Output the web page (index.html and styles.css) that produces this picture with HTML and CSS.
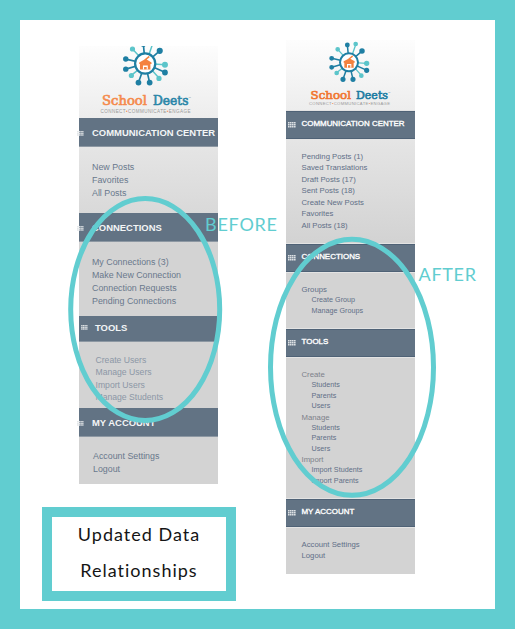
FILE: index.html
```html
<!DOCTYPE html>
<html lang="en">
<head>
<meta charset="utf-8">
<title>Updated Data Relationships</title>
<link rel="stylesheet" href="styles.css">
</head>
<body>
<svg class="defs" width="0" height="0">
  <symbol id="burst" viewBox="0 0 150 150">
    <g stroke="#5cc5ca" stroke-width="4" fill="#5cc5ca">
      <path d="M74 73L38 34M74 73L92 20M74 73L125 76M74 73L112 115M74 73L33 106"/>
      <circle cx="38" cy="34" r="5"/><circle cx="92" cy="18" r="5"/><circle cx="125" cy="76" r="6"/><circle cx="109" cy="113" r="5"/><circle cx="35" cy="105" r="5"/>
    </g>
    <g stroke="#1f7fa3" stroke-width="4.500" fill="#1f7fa3">
      <path d="M72 73L67 20M72 73L110 40M72 73L20 61M72 73L20 88M72 73L54 124M72 73L84 124M72 73L126 97"/>
      <circle cx="67" cy="21" r="5"/><circle cx="111" cy="39" r="6"/><circle cx="20" cy="61" r="5"/><circle cx="20" cy="88" r="5"/><circle cx="54" cy="124" r="5.500"/><circle cx="84" cy="124" r="5.500"/><circle cx="125" cy="97" r="5.500"/>
      <circle cx="72" cy="73" r="27" fill="#fff" stroke-width="6"/>
    </g>
    <path fill="#f4823f" d="M56 70L69 63L82 52L84 56L76 62L89 70V74H86V89H58V74H56Z"/>
    <path fill="#fff" d="M66 78H79V89H76V82H69V89H66Z"/>
  </symbol>
  <symbol id="grid" viewBox="0 0 8 6">
    <path fill="#dde1e4" d="M0 0h1.6v1.6H0zM2 0h1.6v1.6H2zM4 0h1.6v1.6H4zM6 0h1.6v1.6H6zM0 2h1.6v1.6H0zM2 2h1.6v1.6H2zM4 2h1.6v1.6H4zM6 2h1.6v1.6H6zM0 4h1.6v1.6H0zM2 4h1.6v1.6H2zM4 4h1.6v1.6H4zM6 4h1.6v1.6H6z"/>
  </symbol>
</svg>
<main class="frame">
  <div class="left-column">
    <nav class="panel before">
      <svg class="logo" width="139" height="72" viewBox="79 46 139 72">
        <use href="#burst" x="118.300" y="36.300" width="56" height="56"/>
        <g class="wordmark" font-size="12.600">
          <text x="102" y="105" textLength="45" lengthAdjust="spacingAndGlyphs" fill="#f58a4c" stroke="#f58a4c">School</text>
          <text x="153" y="105" textLength="35.500" lengthAdjust="spacingAndGlyphs" fill="#2b86a8" stroke="#2b86a8">Deets</text>
        </g>
        <text class="tagline" x="188.500" y="99" font-size="2.500">™</text>
        <text class="tagline" x="100.500" y="112.500" font-size="4.600" textLength="90">CONNECT<tspan fill="#f58a4c">•</tspan>COMMUNICATE<tspan fill="#f58a4c">•</tspan>ENGAGE</text>
      </svg>
      <h2><svg><use href="#grid"/></svg>COMMUNICATION CENTER</h2>
      <ul class="posts"><li>New Posts</li><li>Favorites</li><li>All Posts</li></ul>
      <h2><svg><use href="#grid"/></svg>CONNECTIONS</h2>
      <ul class="connections"><li>My Connections (3)</li><li>Make New Connection</li><li>Connection Requests</li><li>Pending Connections</li></ul>
      <h2 class="tools-title"><svg><use href="#grid"/></svg>TOOLS</h2>
      <ul class="tools"><li>Create Users</li><li>Manage Users</li><li>Import Users</li><li>Manage Students</li></ul>
      <h2><svg><use href="#grid"/></svg>MY ACCOUNT</h2>
      <ul class="account"><li>Account Settings</li><li>Logout</li></ul>
    </nav>
    <h1 class="caption"><span>Updated Data</span><span>Relationships</span></h1>
  </div>
  <nav class="panel after">
    <svg class="logo" width="129" height="71" viewBox="286 40 129 71">
      <use href="#burst" x="325" y="38" width="50" height="50"/>
      <g class="wordmark" font-size="11.500">
        <text x="310.500" y="98.800" textLength="40.500" lengthAdjust="spacingAndGlyphs" fill="#f1752e" stroke="#f1752e">School</text>
        <text x="356" y="98.800" textLength="32" lengthAdjust="spacingAndGlyphs" fill="#1c7ca2" stroke="#1c7ca2">Deets</text>
      </g>
      <text class="tagline" x="388" y="93.500" font-size="2.500">™</text>
      <text class="tagline" x="309" y="105.300" font-size="4.200" textLength="81">CONNECT<tspan fill="#f1752e">•</tspan>COMMUNICATE<tspan fill="#f1752e">•</tspan>ENGAGE</text>
    </svg>
    <h2><svg><use href="#grid"/></svg>COMMUNICATION CENTER</h2>
    <ul class="posts"><li>Pending Posts (1)</li><li>Saved Translations</li><li>Draft Posts (17)</li><li>Sent Posts (18)</li><li>Create New Posts</li><li>Favorites</li><li>All Posts (18)</li></ul>
    <h2><svg><use href="#grid"/></svg>CONNECTIONS</h2>
    <ul class="connections"><li>Groups</li><li class="sub">Create Group</li><li class="sub">Manage Groups</li></ul>
    <h2><svg><use href="#grid"/></svg>TOOLS</h2>
    <ul class="tools"><li>Create</li><li class="sub">Students</li><li class="sub">Parents</li><li class="sub">Users</li><li>Manage</li><li class="sub">Students</li><li class="sub">Parents</li><li class="sub">Users</li><li>Import</li><li class="sub">Import Students</li><li class="sub">Import Parents</li></ul>
    <h2><svg><use href="#grid"/></svg>MY ACCOUNT</h2>
    <ul class="account"><li>Account Settings</li><li>Logout</li></ul>
  </nav>
  <svg class="marks" width="515" height="629" viewBox="0 0 515 629">
    <ellipse cx="145.200" cy="309.500" rx="74.500" ry="111"/>
    <ellipse cx="352" cy="367.300" rx="81.500" ry="128"/>
    <text x="205" y="231" textLength="72">BEFORE</text>
    <text x="418.500" y="281" textLength="57.500">AFTER</text>
  </svg>
</main>
</body>
</html>
```
FILE: styles.css
```css
* { box-sizing: border-box; }
body { margin: 0; }
.defs { position: absolute; }
.frame {
  position: relative;
  display: flex;
  align-items: flex-start;
  width: 515px;
  height: 629px;
  border: 20px solid #61cdd0;
  background: #fff;
  overflow: hidden;
}
.left-column { width: 244px; margin-left: 22px; padding-top: 26px; }
.panel {
  display: flex;
  flex-direction: column;
  font-family: "Liberation Sans", Arial, sans-serif;
  color: #69788c;
  background: #d3d3d3 linear-gradient(#fdfdfd 0, #ededed 70px, #e4e4e4 105px, #d3d3d3 200px) no-repeat;
}
.logo { display: block; flex: none; }
.wordmark { font-family: "DejaVu Serif", serif; stroke-width: .6; }
.tagline { font-family: "Liberation Sans", sans-serif; fill: #999; }
.panel ul { list-style: none; margin: 0; padding: 0; flex: none; white-space: nowrap; }
.panel h2 {
  display: flex;
  align-items: center;
  flex: none;
  margin: 0;
  color: #fff;
  background: #627384;
  white-space: nowrap;
}
.panel h2 svg { flex: none; overflow: hidden; }

.before { width: 139px; height: 438px; margin-left: 37px; }
.before h2 { height: 29px; padding: 1px 0 0; font-size: 9.45px; color: #f3f5f6; border-bottom: 1px solid #8d98a3; }
.before h2 svg { width: 7px; height: 5px; margin: 1px 8px 0 -2px; }
.before ul { font-size: 8.85px; line-height: 12.9px; padding-left: 13px; }
.before .posts { height: 66px; padding-top: 14px; }
.before .connections { height: 74px; padding-top: 14px; }
.before .tools-title { height: 26px; padding: 0 0 3px; }
.before .tools-title svg { margin: 1px 7px 0 2px; }
.before .tools { height: 66px; padding: 12px 0 0 16.5px; font-size: 8.65px; line-height: 12.4px; color: #8c97a6; }
.before .account { padding: 13px 0 0 14px; }

.after { width: 129px; height: 534px; margin-top: 20px; color: #616f87; }
.after h2 {
  height: 28px;
  padding-bottom: 3px;
  font-size: 7.95px;
  font-weight: normal;
  -webkit-text-stroke: .35px #fff;
  border-top: 1px solid #4f6276;
  border-bottom: 1px solid #4f6276;
  box-shadow: 0 1px #e3e3e3, 0 -1px #e3e3e3;
}
.after h2 svg { width: 8px; height: 6px; margin: 3px 5.5px 0 2px; }
.after ul { font-size: 7.75px; line-height: 11.45px; padding-left: 15.5px; }
.after .posts { height: 105px; padding-top: 12px; }
.after .connections { height: 57px; padding-top: 12px; }
.after .tools { height: 142px; padding-top: 12px; }
.after .account { padding-top: 12px; }
.after .connections li, .after .tools li { line-height: 11px; }
.after .connections li.sub, .after .tools li.sub { font-size: 7.2px; line-height: 10.5px; padding-left: 10px; }
.after .tools li:not(.sub) { color: #7d818a; }

.caption {
  width: 194px;
  height: 94px;
  margin: 23px 0 0;
  border: 10px solid #61cdd0;
  font: 18px/36px Lato, sans-serif;
  letter-spacing: 1px;
  color: #151515;
  text-align: center;
}
.caption span { display: block; position: relative; top: -1px; }
.marks { position: absolute; left: -20px; top: -20px; }
.marks ellipse { fill: none; stroke: #61cdd0; stroke-width: 5; }
.marks text { font: 400 18px Lato, sans-serif; fill: #61cdd0; }
```
